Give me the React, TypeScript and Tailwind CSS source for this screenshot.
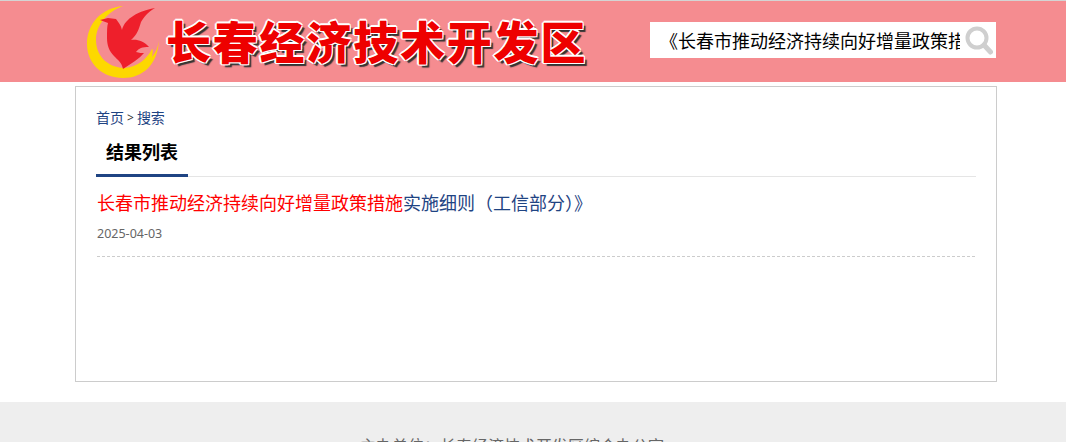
export default function App() {
  const font = "font-['Noto_Sans','Noto_Sans_CJK_SC',sans-serif]";
  return (
    <div className={`w-full h-[442px] overflow-hidden bg-white ${font}`}>
      <header className="h-[82px] bg-[#f58c90] border-t border-[#d4d4d4] flex">
        <div className="w-[921px] ml-[75px] flex items-start">
          <svg className="ml-[12px] mt-[4px] shrink-0" width="76" height="74" viewBox="0 0 76 74">
            <path d="M36 1 C14 3 0 19 0 39 C0 59 16 73 36 73 C56 73 70 60 72 36 C71 42 69 47 65 52 C66 46 66 44 65 44 C60 54 50 62 38 63 C22 63 9 52 9 35 C9 20 20 7 36 1 Z" fill="#fdd800" />
            <path d="M21 13 L29 14 C31 17 34 20 35 25 C37 16 47 7 68 3 C60 8 57 12 54 17 C52 24 50 30 44 35 C50 34 57 36 62 42 C55 42 52 43 49 47 C52 48 55 48 57 48 C52 54 45 58 36 64 C35 58 31 55 27 51 C22 46 20 40 20 33 C20 26 20 21 21 18 L13 15 Z" fill="#ee1f2b" />
          </svg>
          <h1 className="ml-[3px] mt-[10px] text-[45px] leading-[60px] font-black tracking-[1.8px] whitespace-nowrap text-[#ee0000] font-['Noto_Sans_CJK_SC',sans-serif] [text-shadow:-1px_-1px_0_#fff,1px_-1px_0_#fff,-1px_1px_0_#fff,1px_1px_0_#fff,0_-2px_0_#fff,-2px_0_0_#fff,3px_3px_1px_#333]">
            长春经济技术开发区
          </h1>
          <div className="ml-auto mt-[21px] w-[346px] h-[36px] bg-white flex items-center shrink-0">
            <input
              readOnly
              value="《长春市推动经济持续向好增量政策措施实施细则（工信部分）》"
              className="ml-[10px] w-[300px] h-[36px] text-[18px] text-black outline-none bg-transparent"
            />
            <svg className="ml-[5px] shrink-0" width="28" height="30" viewBox="0 0 28 30" fill="none" stroke="#cfcfcf">
              <circle cx="12" cy="13" r="9.5" strokeWidth="4" />
              <path d="M19 20 L25.5 27" strokeWidth="5" strokeLinecap="round" />
            </svg>
          </div>
        </div>
      </header>
      <main className="mt-[4px] ml-[75px] w-[922px] h-[296px] border border-[#cccccc] px-[20px] pt-[19px]">
        <div className="text-[14px] leading-[24px] text-[#333] h-[24px] flex items-center">
          <span className="text-[#1f4483]">首页</span>
          <span className="mx-[3px] text-[12px]">&gt;</span>
          <span className="text-[#1f4483]">搜索</span>
        </div>
        <div className="mt-[7px] h-[40px] border-b border-[#e5e5e5] flex">
          <div className="w-[92px] h-[40px] border-b-[3px] border-[#1f4483] pl-[10px] text-[18px] leading-[30px] font-bold text-black">
            结果列表
          </div>
        </div>
        <div className="mx-[1px] h-[80px] border-b border-dashed border-[#cccccc]">
          <div className="pt-[13px] text-[18px] leading-[26px] text-[#1f4483] whitespace-nowrap">
            <span className="text-[#ff0000]">长春市推动经济持续向好增量政策措施</span>实施细则（工信部分）》
          </div>
          <div className="mt-[8px] text-[12.5px] leading-[20px] text-[#666]">2025-04-03</div>
        </div>
      </main>
      <footer className="mt-[20px] h-[40px] bg-[#eeeeee] pt-[32px] pr-[42px] text-center text-[16px] leading-[24px] text-[#666]">
        主办单位：长春经济技术开发区综合办公室
      </footer>
    </div>
  );
}
